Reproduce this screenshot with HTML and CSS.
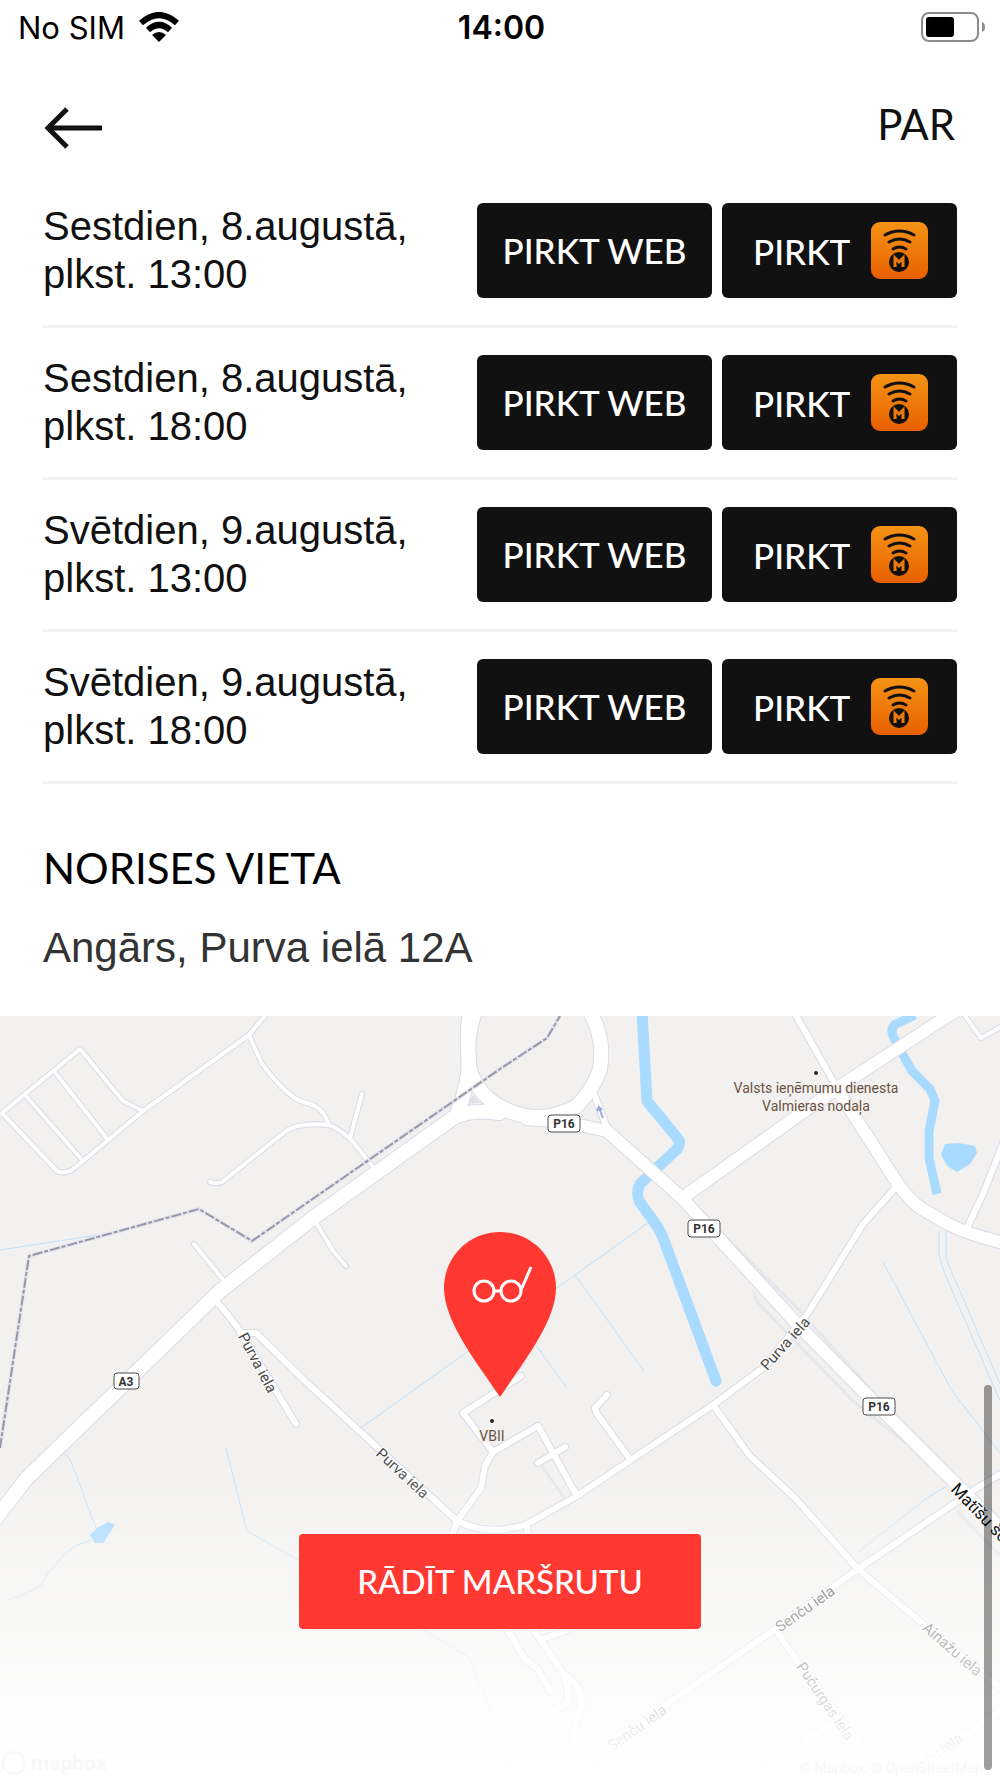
FILE: index.html
```
<!DOCTYPE html>
<html lang="lv">
<head>
  <meta charset="UTF-8">
  <meta name="viewport" content="width=device-width, initial-scale=1">
  <title>Norises vieta</title>
  <link rel="stylesheet" href="styles.css">
</head>
<body>

<!-- shared icon for the app buttons -->
<svg class="sprite" aria-hidden="true">
  <defs>
    <linearGradient id="orange" x1="0" y1="0" x2="0" y2="1">
      <stop offset="0" stop-color="#f49314"/>
      <stop offset="1" stop-color="#e96000"/>
    </linearGradient>
  </defs>
  <symbol id="mobilly" viewBox="0 0 57 57">
    <rect width="57" height="57" rx="9" fill="url(#orange)"/>
    <g fill="none" stroke="#111" stroke-width="3" stroke-linecap="round">
      <path d="M14 13 Q28.500 5 43 13"/>
      <path d="M18 20 Q28.500 14 39 20"/>
      <path d="M22 27 Q28.500 23 35 27"/>
    </g>
    <circle cx="28" cy="40" r="10" fill="#111"/>
    <path d="M24 45 V36 L28 40 L32 36 V45" fill="none" stroke="#ef7a0b" stroke-width="3"/>
  </symbol>
</svg>

<div class="statusBar">
  <div class="carrier">
    <span>No SIM</span>
    <svg width="40" height="30" viewBox="0 0 40 30">
      <path d="M20 30 L13 23 Q20 17 27 23 Z"/>
      <path d="M9 18 Q20 8 31 18" fill="none" stroke="#000" stroke-width="6"/>
      <path d="M2 11 Q20 -5 38 11" fill="none" stroke="#000" stroke-width="6"/>
    </svg>
  </div>
  <span class="clock">14:00</span>
  <div class="batteryContainer">
    <svg width="64" height="30" viewBox="0 0 64 30">
      <rect x="1" y="1" width="56" height="28" rx="7" fill="none" stroke="#8c8c8c" stroke-width="2"/>
      <rect x="5" y="5" width="28" height="20" rx="3"/>
      <path d="M61 10 Q64 11 64 15 Q64 19 61 20 Z" fill="#8c8c8c"/>
    </svg>
  </div>
</div>

<header class="header">
  <button type="button" class="backButton" aria-label="Atpakaļ">
    <svg width="58" height="42" viewBox="0 0 58 42">
      <path d="M58 21 H5 M23 2 L4 21 L23 40" fill="none" stroke="#111" stroke-width="5"/>
    </svg>
  </button>
  <h1>PAR</h1>
</header>

<main>
  <ul class="dates">
    <li class="dateRow">
      <p>Sestdien, 8.augustā,<br>plkst. 13:00</p>
      <button type="button" class="buy">PIRKT WEB</button>
      <button type="button" class="buy buyApp">PIRKT <svg width="57" height="57"><use href="#mobilly"/></svg></button>
    </li>
    <li class="dateRow">
      <p>Sestdien, 8.augustā,<br>plkst. 18:00</p>
      <button type="button" class="buy">PIRKT WEB</button>
      <button type="button" class="buy buyApp">PIRKT <svg width="57" height="57"><use href="#mobilly"/></svg></button>
    </li>
    <li class="dateRow">
      <p>Svētdien, 9.augustā,<br>plkst. 13:00</p>
      <button type="button" class="buy">PIRKT WEB</button>
      <button type="button" class="buy buyApp">PIRKT <svg width="57" height="57"><use href="#mobilly"/></svg></button>
    </li>
    <li class="dateRow">
      <p>Svētdien, 9.augustā,<br>plkst. 18:00</p>
      <button type="button" class="buy">PIRKT WEB</button>
      <button type="button" class="buy buyApp">PIRKT <svg width="57" height="57"><use href="#mobilly"/></svg></button>
    </li>
  </ul>

  <section class="venue">
    <h2>NORISES VIETA</h2>
    <p>Angārs, Purva ielā 12A</p>
  </section>

  <section class="map">
    <svg class="mapCanvas" viewBox="0 0 1000 763" preserveAspectRatio="xMidYMin slice">
      <defs>
        <linearGradient id="fade" x1="0" y1="0" x2="0" y2="1">
          <stop offset="0" stop-color="#fff" stop-opacity="0"/>
          <stop offset="1" stop-color="#fff"/>
        </linearGradient>
        <g id="small">
          <path d="M268 -4 L249 19 L143 95 L83 145 L73 153 Q65 159 57 155 L2 97 L80 33 L123 85 L143 95"/>
          <path d="M54 55 L108 124 M25 79 L83 145"/>
          <path d="M249 19 L262 48 Q280 72 296 83 L315 90 Q324 95 329 109"/>
          <path d="M210 166 Q217 168 222 166 L286 115 Q300 106 329 109 Q345 116 353 126 L373 151 M362 78 L350 122"/>
          <path d="M194 228 L225 266 M315 205 L333 235 L346 250"/>
          <path d="M963 -3 L981 22 L1004 9"/>
        </g>
        <g id="medium">
          <path d="M217 286 L228 299 L240 315 L296 408"/>
          <path d="M240 317 L256 317 L305 365 L378 432 L457 505 Q490 521 527 508 L577 480 L713 389 L763 352 L808 297 L863 208 L897 170"/>
          <path d="M521 360 L463 397 L493 436 L485 450 L481 472 L457 505 L452 520"/>
          <path d="M493 436 L538 410 L577 480 M538 447 L565 431"/>
          <path d="M607 379 L595 392 L597 398 L630 443"/>
          <path d="M713 389 L750 440 L795 482 L858 553 L923 608 L1004 675"/>
          <path d="M1004 456 L977 472 L858 553 L775 613 L667 688 L610 735 Q585 750 573 725 Q571 716 582 688 Q582 670 563 657 L533 613 L527 510"/>
          <path d="M553 695 L568 687 L568 672 L563 657 M507 613 L525 643 L537 652 L551 676 M543 623 L570 613"/>
          <path d="M775 613 L797 645 L870 742 M805 725 L833 707 M1004 692 L967 718 L927 748 M967 718 L985 735"/>
          <path d="M794 -4 L837 72 M967 212 L983 178 L1004 125 M593 75 L609 117"/>
        </g>
        <g id="large">
          <path d="M682 182 L837 72 L954 -4"/>
          <path d="M835 70 L898 168 Q910 185 922 193 L948 208 Q970 219 1004 227"/>
          <path d="M527 103 L560 105 L607 115 L682 182 L797 308 L873 385 L953 465 L1010 522"/>
        </g>
        <g id="main">
          <path d="M-4 502 L27 462 L120 372 L220 275 L313 202 L453 102 Q470 93 500 97"/>
          <path d="M470 -4 Q466 20 469 42 Q469 70 457 97"/>
          <path d="M475 -4 Q468 14 468 38 C468 68 490 95 532 101 Q556 102 577 90 Q594 72 600 53 Q605 22 590 -4"/>
        </g>
      </defs>

      <rect width="1000" height="763" fill="#f2f1ef"/>

      <!-- water -->
      <g fill="none" stroke="#bfe1fb" stroke-width="1">
        <path d="M0 234 L97 219"/>
        <path d="M648 207 L575 259 L362 411 M575 259 L644 355 M535 328 L567 372"/>
        <path d="M883 246 L952 375 L1000 437 M939 215 V240 L945 258 L1000 385 M946 215 V243 L1000 368"/>
        <path d="M858 536 L927 482 L947 470 M63 437 L70 443 L96 512 M91 524 L75 530 L65 538 L50 555 L40 570 L25 578 L7 584"/>
        <path d="M226 432 L247 515 L298 544 L422 613 L469 641 L500 718 L515 763"/>
      </g>
      <g fill="none" stroke="#a9daff" stroke-linejoin="round">
        <path d="M642 -4 L647 85 L679 124 Q681 130 675 135 L640 168 Q636 175 639 185 L655 207 Q661 215 665 227 L716 365" stroke-width="11" stroke-linecap="round"/>
        <path d="M915 -1 L896 8 Q889 13 894 22 L902 37 L912 55 L930 73 L935 85 L929 115 V142 L937 178" stroke-width="9"/>
      </g>
      <path d="M945 128 L958 127 L975 130 L977 137 L970 148 L957 156 L947 150 L941 138 Z" fill="#a9daff"/>
      <path d="M97 512 L108 506 L114 508 L113 512 L103 527 L95 527 L90 519 Z" fill="#a9daff"/>

      <!-- footpaths -->
      <path d="M692 188 L767 262 L800 295 L815 312 L870 372 M755 278 L757 286 L853 385 L907 428 M957 495 L1000 540 M542 450 L565 483" fill="none" stroke="#dcdce6" stroke-width="3" stroke-dasharray="1 1"/>

      <!-- roads: casing first, then fill -->
      <g fill="none" stroke="#dadae8" stroke-linejoin="round" stroke-linecap="round">
        <use href="#small" stroke-width="6"/>
        <use href="#medium" stroke-width="8"/>
        <use href="#large" stroke-width="14"/>
        <use href="#main" stroke-width="16"/>
      </g>
      <g fill="none" stroke="#fff" stroke-linejoin="round" stroke-linecap="round">
        <use href="#small" stroke-width="4"/>
        <use href="#medium" stroke-width="6"/>
        <use href="#large" stroke-width="12"/>
        <use href="#main" stroke-width="14"/>
      </g>
      <path d="M473 79 L480 87 H469 Z" fill="#e0e0e6"/>
      <path d="M603 102 L599 92 M597 95 L599 91 L602 94" fill="none" stroke="#9ba6d8" stroke-width="2"/>

      <!-- border -->
      <path d="M0 432 L29 240 L199 193 L252 225 L500 53 L547 22 L560 0" fill="none" stroke="#e4e4ec" stroke-width="4"/>
      <path d="M0 432 L29 240 L199 193 L252 225 L500 53 L547 22 L560 0" fill="none" stroke="#9698a8" stroke-width="2" stroke-dasharray="10 2 4 2"/>

      <!-- street names -->
      <g class="street">
        <text transform="translate(253 349) rotate(62)">Purva iela</text>
        <text transform="translate(399 461) rotate(43)">Purva iela</text>
        <text transform="translate(789 331) rotate(-48)">Purva iela</text>
        <text transform="translate(808 597) rotate(-35)">Senču iela</text>
        <text transform="translate(949 637) rotate(41)">Ainažu iela</text>
        <text transform="translate(821 688) rotate(56)">Pučurgas iela</text>
        <text transform="translate(640 716) rotate(-35)">Senču iela</text>
        <text transform="translate(936 744) rotate(-35)">Senču iela</text>
      </g>

      <g class="shield">
        <rect x="114" y="357" width="25" height="16" rx="3"/>
        <text x="126" y="370">A3</text>
        <rect x="548" y="99" width="32" height="17" rx="3"/>
        <text x="564" y="112">P16</text>
        <rect x="688" y="204" width="32" height="17" rx="3"/>
        <text x="704" y="217">P16</text>
        <rect x="863" y="382" width="32" height="17" rx="3"/>
        <text x="879" y="395">P16</text>
      </g>

      <g class="place">
        <circle cx="816" cy="57" r="2"/>
        <text x="816" y="77">Valsts ieņēmumu dienesta</text>
        <text x="816" y="95">Valmieras nodaļa</text>
        <circle cx="492" cy="405" r="2"/>
        <text x="492" y="425">VBII</text>
      </g>

      <rect y="440" width="1000" height="310" fill="url(#fade)"/>
      <rect y="749" width="1000" height="14" fill="#fff"/>

      <text class="highway" transform="translate(950 474) rotate(46)">Matīšu šoseja</text>

      <g class="credit">
        <circle cx="14" cy="747" r="11" fill="none" stroke="#fafafa" stroke-width="3"/>
        <text x="31" y="754" class="creditLogo">mapbox</text>
        <text x="800" y="757">© Mapbox, © OpenStreetMap</text>
      </g>

      <!-- pin -->
      <path d="M500 381 C478 348 444 306 444 272 C444 241 469 216 500 216 C531 216 556 241 556 272 C556 306 522 348 500 381 Z" fill="#ff3932"/>
      <g fill="none" stroke="#fff" stroke-width="3">
        <circle cx="484" cy="275" r="10"/>
        <circle cx="511" cy="275" r="10"/>
        <path d="M494 275 H501 M521 274 L531 251"/>
      </g>
    </svg>

    <button type="button" class="routeButton">RĀDĪT MARŠRUTU</button>
    <div class="scrollThumb"></div>
  </section>
</main>

</body>
</html>
```
FILE: styles.css
```
* {
  box-sizing: border-box;
}

body {
  margin: 0;
  background: #fff;
  color: #111;
  font-family: "Liberation Sans", Arial, sans-serif;
}

h1, h2, p, ul {
  margin: 0;
  padding: 0;
}

button {
  border: 0;
  padding: 0;
  cursor: pointer;
}

svg {
  display: block;
}

h1, h2, .buy, .routeButton {
  font-family: Lato, sans-serif;
}

.sprite {
  position: absolute;
  width: 0;
  height: 0;
}

/* status bar */

.statusBar {
  display: grid;
  grid-template-columns: 1fr auto 1fr;
  align-items: center;
  height: 52px;
  padding: 2px 15px 0 18px;
  color: #000;
  font-family: Inter, sans-serif;
  font-size: 31px;
}

.carrier {
  display: flex;
  align-items: center;
  gap: 14px;
}

.clock {
  font-size: 32px;
  font-weight: 600;
}

.batteryContainer {
  display: flex;
  justify-content: flex-end;
}

/* header */

.header {
  display: flex;
  justify-content: space-between;
  align-items: center;
  height: 124px;
  padding: 28px 45px 0 44px;
}

.backButton {
  background: none;
}

h1 {
  font-size: 42px;
  line-height: 48px;
  font-weight: 400;
  margin-bottom: 8px;
}

/* dates */

.dates {
  list-style: none;
  margin: 0 43px;
}

.dateRow {
  display: grid;
  grid-template-columns: 1fr 235px 235px;
  gap: 10px;
  align-items: center;
  padding: 27px 0;
  border-bottom: 3px solid #f2f2f2;
}

.dateRow p {
  font-size: 40px;
  line-height: 48px;
  margin: -1px 0 0;
}

.buy {
  height: 95px;
  border-radius: 6px;
  padding-bottom: 2px;
  background: #111;
  color: #fff;
  font-size: 35px;
  font-weight: 500;
}

.buyApp {
  display: flex;
  justify-content: space-between;
  align-items: center;
  padding: 0 29px 0 31px;
}

/* venue */

.venue {
  padding: 60px 43px 44px;
}

.venue h2 {
  font-size: 42px;
  line-height: 48px;
  font-weight: 400;
  color: #000;
  margin-bottom: 32px;
}

.venue p {
  font-size: 42px;
  line-height: 48px;
  color: #333;
}

/* map */

.map {
  position: relative;
}

.mapCanvas {
  width: 100%;
  height: 762px;
}

.mapCanvas text {
  font-family: Roboto, sans-serif;
  font-size: 15px;
}

.street {
  fill: #4a4a4a;
  stroke: #fff;
  stroke-width: 2px;
  paint-order: stroke;
  text-anchor: middle;
}

.mapCanvas .highway {
  font-size: 17px;
  fill: #111;
  stroke: #fff;
  stroke-width: 2px;
  paint-order: stroke;
}

.place {
  fill: #6b5344;
  stroke: #f2f1ef;
  stroke-width: 2px;
  paint-order: stroke;
  text-anchor: middle;
}

.mapCanvas .place text {
  font-size: 14px;
}

.place circle {
  fill: #3d2314;
  stroke: none;
}

.shield rect {
  fill: #fff;
  stroke: #4d4d4d;
}

.mapCanvas .shield text {
  font-size: 12px;
  font-weight: 700;
  fill: #333;
  text-anchor: middle;
}

.mapCanvas .credit text {
  font-size: 14px;
  fill: #f8f8f8;
}

.mapCanvas .credit .creditLogo {
  font-size: 21px;
  font-weight: 700;
}

.routeButton {
  position: absolute;
  bottom: 149px;
  left: 50%;
  transform: translateX(-50%);
  width: 402px;
  height: 95px;
  border-radius: 4px;
  padding-bottom: 2px;
  background: #ff3932;
  color: #fff;
  font-size: 33px;
  font-weight: 500;
}

.scrollThumb {
  position: absolute;
  right: 8px;
  bottom: 8px;
  width: 8px;
  height: 385px;
  border-radius: 4px;
  background: rgba(0, 0, 0, 0.38);
}
```
